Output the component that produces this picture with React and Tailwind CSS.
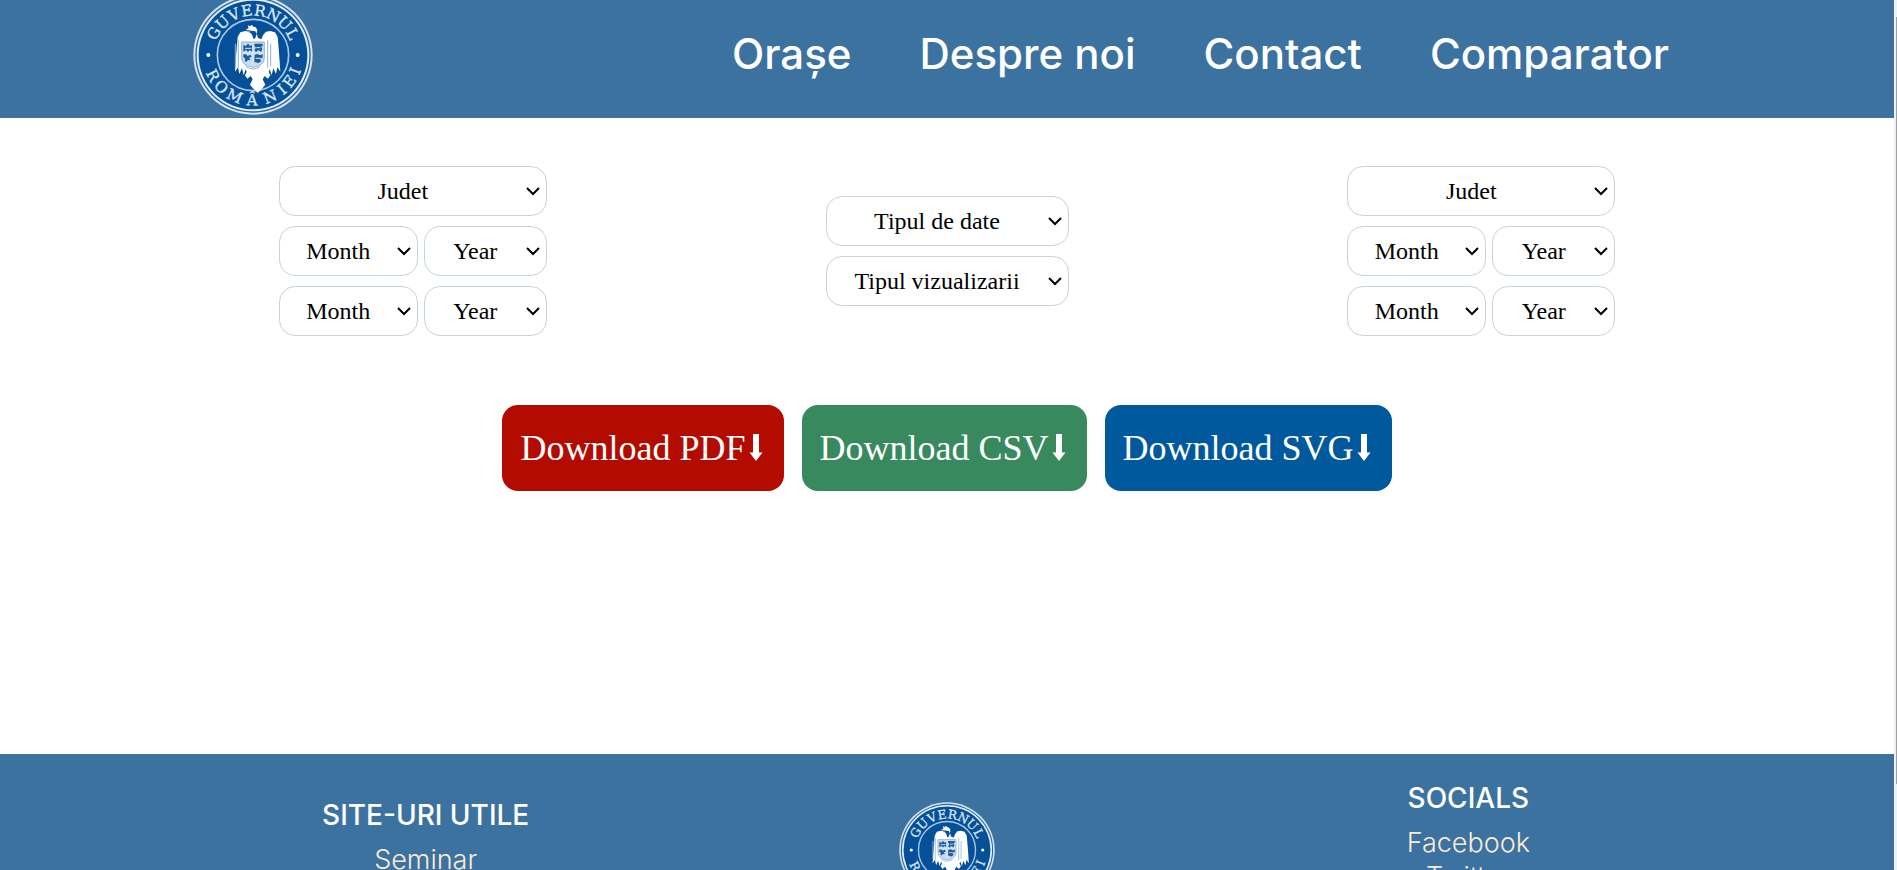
const NAV_LINKS = ["Orașe", "Despre noi", "Contact", "Comparator"];

const DOWNLOADS = [
  { label: "Download PDF", color: "bg-[#b30b00]" },
  { label: "Download CSV", color: "bg-[#388a5e]" },
  { label: "Download SVG", color: "bg-[#00599c]" },
];

// Each letter of the seal with its angle, in degrees, around the centre.
const SEAL_TOP = [
  ["G", -61],
  ["U", -43],
  ["V", -25],
  ["E", -8],
  ["R", 9],
  ["N", 27],
  ["U", 45],
  ["L", 62],
];

const SEAL_BOTTOM = [
  ["R", 63],
  ["O", 45],
  ["M", 24],
  ["Â", 1],
  ["N", -22],
  ["I", -40],
  ["E", -54],
  ["I", -69],
];

function Emblem({ className }) {
  return (
    <svg viewBox="38 -14 360 360" className={className} role="img" aria-label="Guvernul României">
      <circle cx="218" cy="166" r="179" fill="#d3e3f1" />
      <circle cx="218" cy="166" r="173" fill="#2868a5" />
      <circle cx="218" cy="166" r="169" fill="#e6eff7" />
      <circle cx="218" cy="166" r="163" fill="#06509a" />
      <circle cx="218" cy="166" r="107" fill="#06509a" stroke="#a9c8e6" strokeWidth="5" />
      <circle cx="84" cy="166" r="6" fill="#fff" />
      <circle cx="352" cy="166" r="6" fill="#fff" />
      <g
        fill="#dbe8f4"
        stroke="#dbe8f4"
        strokeWidth="1"
        fontFamily="'DejaVu Serif', 'Liberation Serif', serif"
        fontSize="46"
        textAnchor="middle"
      >
        {SEAL_TOP.map(([letter, angle]) => (
          <text key={angle} x="218" y="48" transform={`rotate(${angle} 218 166)`}>
            {letter}
          </text>
        ))}
        {SEAL_BOTTOM.map(([letter, angle]) => (
          <text key={angle} x="218" y="317" transform={`rotate(${angle} 218 166)`}>
            {letter}
          </text>
        ))}
      </g>
      <path
        fill="#fff"
        d="M196 91l9-6-3-8 8 3 4-5 5 6 7 2 5 8-2 10 4 14 10 4 6-14 8-9 12-2 15 4 8 14 3 34 3 40 2 30-9-13-4 20-8-17-5 21-6-18-3 8 5 10-7 10-10-8-6 10 8 16-10 12-13 13-13-13-10-12 8-16-6-10-10 8-7-10 5-10-3-8-6 18-5-21-8 17-4-20-9 13 2-30 3-40 3-34 8-14 15-4 12 2 8 9 5 14 5-4 4-12-4-8z"
      />
      <path
        d="M165 132v68M174 122v82M271 132v68M262 122v82"
        stroke="#8fb4d9"
        strokeWidth="3"
        fill="none"
      />
      <path d="M184 127h68v49q-1 22-34 27q-33-5-34-27z" fill="#c9ddef" stroke="#5f95c9" strokeWidth="2" />
      <path
        d="M189 135l7 4 7-7 7 7 5-4v21l-7-5-5 6-6-6-8 5zM222 132h25v8h-5l4 8-4 9-8-6-7 7-5-7 5-7-5-5zM189 164h8l5 5 8-4 4 6-8 4 5 7-9-1-3 6-6-3 2-7-6-4zM223 165l9-2 7 4 8-3v10l-8 6 4 5-9 5-12-3z"
        fill="#1d5c9f"
      />
      <path d="M218 129v71M186 160h64M194 146h19M228 144h12M226 176h18" stroke="#d9e8f5" strokeWidth="3" />
      <path d="M202 94l10-1-6 7z" fill="#5f95c9" />
      <path d="M197 201q21 14 42 0" fill="none" stroke="#8fb4d9" strokeWidth="3" />
    </svg>
  );
}

function Picker({ label }) {
  return (
    <div className="relative">
      <select
        aria-label={label}
        className="h-[50px] w-full appearance-none rounded-2xl border border-[#c5d4de] bg-white pr-5 text-center font-['Liberation_Serif',serif] text-2xl text-black"
      >
        <option>{label}</option>
      </select>
      <svg
        viewBox="0 0 14 10"
        className="pointer-events-none absolute top-5 right-[7px] h-2.5 w-3.5"
        fill="none"
        stroke="#000"
        strokeWidth="2"
        aria-hidden="true"
      >
        <path d="M1 2l6 6 6-6" />
      </svg>
    </div>
  );
}

function CountyFilters() {
  return (
    <div className="grid grid-cols-[139px_123px] gap-x-1.5 gap-y-2.5">
      <div className="col-span-2">
        <Picker label="Judet" />
      </div>
      <Picker label="Month" />
      <Picker label="Year" />
      <Picker label="Month" />
      <Picker label="Year" />
    </div>
  );
}

function DownArrow() {
  return (
    <svg viewBox="0 0 20 28" className="h-7 w-5" fill="currentColor" aria-hidden="true">
      <path d="M7 0h6v18.500h3.500L10 27 3.500 18.500H7z" />
    </svg>
  );
}

function FooterColumn({ title, links, className }) {
  return (
    <div className={`flex flex-col items-center ${className}`}>
      <h2 className="mb-1 text-[28px] leading-[48px] font-medium text-white">{title}</h2>
      {links.map((link) => (
        <a key={link} href="#" className="text-[27px] leading-[34px] font-light text-[#faebd7]">
          {link}
        </a>
      ))}
    </div>
  );
}

export default function App() {
  return (
    <div className="flex min-h-screen flex-col bg-white pr-[3px] font-['Inter',sans-serif]">
      <header className="flex h-[118px] items-center justify-between bg-[#3c72a0] pr-[225px] pl-[193px]">
        <a href="#" className="pb-2">
          <Emblem className="size-[120px]" />
        </a>
        <nav className="flex gap-[68px] pb-2.5">
          {NAV_LINKS.map((link) => (
            <a key={link} href="#" className="text-[42px] leading-[60px] font-medium text-white">
              {link}
            </a>
          ))}
        </nav>
      </header>

      <main className="flex h-[636px] flex-col pt-12">
        <div className="flex items-center justify-evenly">
          <CountyFilters />
          <div className="flex w-[243px] flex-col gap-2.5">
            <Picker label="Tipul de date" />
            <Picker label="Tipul vizualizarii" />
          </div>
          <CountyFilters />
        </div>
        <div className="mt-[69px] flex justify-center gap-[18px]">
          {DOWNLOADS.map(({ label, color }) => (
            <button
              key={label}
              type="button"
              className={`flex h-[86px] items-center rounded-2xl px-[18px] font-['Liberation_Serif',serif] text-4xl text-white ${color}`}
            >
              {label}
              <DownArrow />
            </button>
          ))}
        </div>
      </main>

      <footer className="grid grow grid-cols-3 items-start bg-[#3c72a0] px-[165px]">
        <FooterColumn title="SITE-URI UTILE" links={["Seminar"]} className="pt-[37px]" />
        <div className="flex justify-center pt-12">
          <Emblem className="size-24" />
        </div>
        <FooterColumn title="SOCIALS" links={["Facebook", "Twitter"]} className="pt-5" />
      </footer>

      <div className="fixed inset-y-0 right-0 w-[3px] bg-[#f1f1f1] pt-[17px]" aria-hidden="true">
        <div className="ml-auto h-[767px] w-px bg-[#a0a0a0]" />
      </div>
    </div>
  );
}
